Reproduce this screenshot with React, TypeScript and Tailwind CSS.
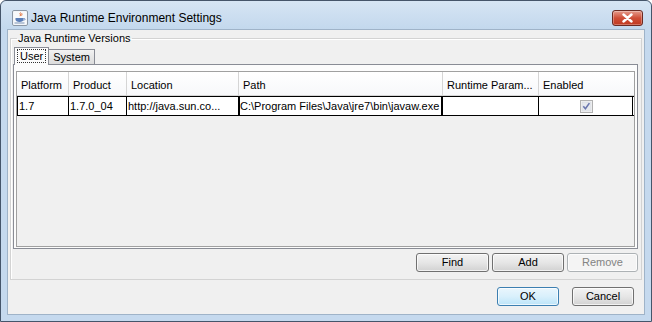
import React from "react";

const columns = [
  { label: "Platform", width: 52 },
  { label: "Product", width: 58 },
  { label: "Location", width: 112 },
  { label: "Path", width: 204 },
  { label: "Runtime Param...", width: 96 },
  { label: "Enabled", width: 94 },
];

const row = ["1.7", "1.7.0_04", "http://java.sun.co...", "C:\\Program Files\\Java\\jre7\\bin\\javaw.exe", ""];

function JavaIcon() {
  return (
    <svg width="16" height="16" viewBox="0 0 16 16">
      <rect x="0.5" y="0.5" width="15" height="15" rx="1.5" fill="#eef2f6" stroke="#8b97a5" />
      <rect x="1.5" y="1.5" width="13" height="13" fill="#f7f9fb" />
      <path d="M8.5 2.5c-1.5 1.2 1 2 -0.5 3.6M10 3.2c-1 .8.6 1.3-.4 2.4" stroke="#e0662a" strokeWidth="1" fill="none" />
      <path d="M3.5 8h8v1.5c0 1.6-1.6 2.5-4 2.5s-4-.9-4-2.5z" fill="#5b7fb8" />
      <path d="M11.5 8.6h1c.8 0 .8 1.6-1 1.8" stroke="#5b7fb8" strokeWidth="0.9" fill="none" />
      <rect x="2.5" y="12.5" width="10" height="1" fill="#7d93b5" />
    </svg>
  );
}

function CloseButton() {
  return (
    <div className="w-[31px] h-[16px] rounded-[3px] border border-[#6b2a22] bg-gradient-to-b from-[#e49a8b] via-[#cf4e37] to-[#c0391f] flex items-center justify-center shadow-[inset_0_0_0_1px_rgba(255,255,255,0.3)]">
      <svg width="11" height="10" viewBox="0 0 11 10">
        <path d="M1.5 1.5l8 7M9.5 1.5l-8 7" stroke="#ffffff" strokeWidth="2.4" strokeLinecap="round" />
      </svg>
    </div>
  );
}

function CheckBox() {
  return (
    <svg width="13" height="13" viewBox="0 0 13 13">
      <rect x="0.5" y="0.5" width="12" height="12" fill="#f4f4f4" stroke="#b1b1b1" />
      <rect x="2" y="2" width="9" height="9" fill="#e6e9ee" stroke="#d0d4da" strokeWidth="0.5" />
      <path d="M3.3 6.3l2.1 2.4 4-5.6" stroke="#6a76ae" strokeWidth="1.6" fill="none" />
    </svg>
  );
}

function Button({
  label,
  width,
  variant = "normal",
}: {
  label: string;
  width: string;
  variant?: "normal" | "default" | "disabled";
}) {
  const style =
    variant === "default"
      ? "border-[#3c7fb1] bg-gradient-to-b from-[#eaf6fd] via-[#d9f0fc] to-[#bce4f8] text-black"
      : variant === "disabled"
        ? "border-[#adb2b5] bg-[#f4f4f4] text-[#838383]"
        : "border-[#707070] bg-gradient-to-b from-[#f3f3f3] via-[#e6e6e6] to-[#d2d2d2] text-black";
  return (
    <div
      className={`${width} h-[19px] rounded-[3px] border flex items-center justify-center text-[11px] leading-none shadow-[inset_0_0_0_1px_rgba(255,255,255,0.7)] ${style}`}
    >
      {label}
    </div>
  );
}

export default function App() {
  return (
    <div
      className="w-[652px] h-[322px] bg-[#c5d9ee] border border-[#45556a] rounded-t-[6px] flex flex-col text-black"
      style={{ fontFamily: '"Liberation Sans", Arial, sans-serif' }}
    >
      {/* Title bar */}
      <div className="h-[28px] flex items-start pt-[9px] pl-[11px] pr-[8px] bg-gradient-to-b from-[#d6e5f4] to-[#c3d8ed] rounded-t-[6px]">
        <JavaIcon />
        <span className="ml-[3px] text-[12px] leading-[16px] text-black">Java Runtime Environment Settings</span>
        <div className="ml-auto">
          <CloseButton />
        </div>
      </div>

      {/* Client area */}
      <div className="mx-[6px] mb-[6px] flex-1 border border-[#9fb3c8] bg-[#f0f0f0] flex flex-col">
        <fieldset className="mx-[2px] mt-[1px] border border-[#d3d3d3] shadow-[inset_1px_1px_0_#ffffff] pl-[2px] pr-[3px] pb-[7px]">
          <legend className="ml-[4px] px-[1px] text-[11px] leading-[14px]">Java Runtime Versions</legend>

          {/* Tabs */}
          <div className="flex items-end mt-[2px] pl-[1px] h-[17px]">
            <div className="relative z-10 h-[18px] -mb-[1px] px-[3px] pt-[2px] border border-b-0 border-[#898c95] bg-[#fcfcfc] text-[11px] leading-[13px]">
              <span className="px-[2px] outline outline-1 outline-dotted outline-[#333]">User</span>
            </div>
            <div className="h-[15px] px-[4px] border border-b-0 border-l-0 border-[#898c95] bg-gradient-to-b from-[#f2f2f2] to-[#dcdcdc] text-[11px] leading-[14px]">
              System
            </div>
          </div>

          {/* Tab panel */}
          <div className="h-[185px] border border-[#898c95] bg-[#fcfcfc] pt-[6px] px-[2px] pb-[1px]">
            <div className="h-full border border-[#a0a0a0] bg-[#f0f0f0] flex flex-col">
              {/* Header */}
              <div className="flex h-[24px] bg-gradient-to-b from-[#ffffff] to-[#f7f8fa] border-b border-[#d5d5d5]">
                {columns.map((c, i) => (
                  <div
                    key={c.label}
                    className={`h-full flex items-center pl-[4px] pt-[3px] text-[11px] whitespace-nowrap overflow-hidden ${i < columns.length - 1 ? "border-r border-[#d5d5d5]" : ""}`}
                    style={{ width: c.width }}
                  >
                    {c.label}
                  </div>
                ))}
              </div>

              {/* Row */}
              <div className="flex h-[20px] bg-white border-y border-black">
                {columns.map((c, i) => (
                  <div
                    key={c.label}
                    className={`h-full flex items-center text-[11px] whitespace-nowrap overflow-hidden border-r border-black ${i === 0 ? "border-l" : ""} ${i === 3 ? "shadow-[inset_1px_0_0_#000,inset_-1px_0_0_#000] pl-[1px]" : "pl-[1px]"} ${i === 5 ? "justify-center pl-0" : ""}`}
                    style={{ width: c.width }}
                  >
                    {i === 5 ? <CheckBox /> : row[i]}
                  </div>
                ))}
              </div>
            </div>
          </div>

          {/* Panel buttons */}
          <div className="flex justify-end gap-[3px] mt-[4px]">
            <Button label="Find" width="w-[73px]" />
            <Button label="Add" width="w-[72px]" />
            <Button label="Remove" width="w-[71px]" variant="disabled" />
          </div>
        </fieldset>

        {/* Dialog buttons */}
        <div className="flex justify-end gap-[13px] mt-[7px] pr-[10px]">
          <Button label="OK" width="w-[62px]" variant="default" />
          <Button label="Cancel" width="w-[62px]" />
        </div>
      </div>
    </div>
  );
}
